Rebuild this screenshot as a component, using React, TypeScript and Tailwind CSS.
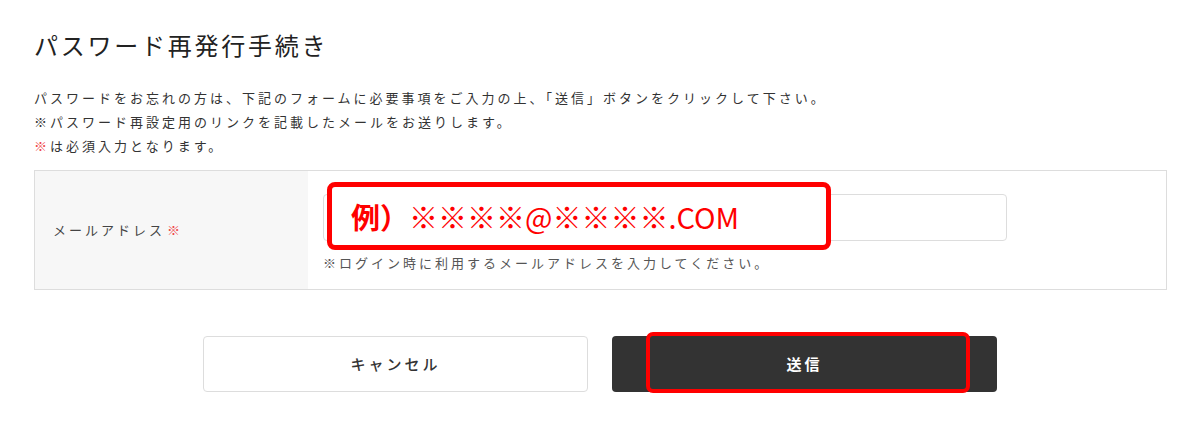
import React from 'react';

const font = { fontFamily: '"Noto Sans CJK JP", "Noto Sans", sans-serif' };

const PasswordReissue = () => {
  return (
    <div className="w-[1200px] h-[423px] bg-white text-[#333] px-[34px] pt-[27px]" style={font}>
      <h1 className="text-[24px] leading-[36px] tracking-[0.115em] font-normal text-[#222]">
        パスワード再発行手続き
      </h1>

      <div className="mt-[23px] text-[13px] leading-[24px] tracking-[3px] text-[#333]">
        <p>パスワードをお忘れの方は、下記のフォームに必要事項をご入力の上、「送信」ボタンをクリックして下さい。</p>
        <p>※パスワード再設定用のリンクを記載したメールをお送りします。</p>
        <p>
          <span className="text-[#f04848]">※</span>は必須入力となります。
        </p>
      </div>

      <div className="mt-[12px] flex border border-[#dddddd] w-[1133px]">
        <div className="w-[273px] bg-[#f7f7f7] flex items-center pl-[18px] text-[13px] tracking-[3px] text-[#444]">
          メールアドレス <span className="ml-[2px] text-[#f04848]">※</span>
        </div>
        <div className="flex-1 pl-[15px] pt-[23px] pb-[16px]">
          <div className="relative w-[684px]">
            <input
              type="text"
              className="w-full h-[47px] border border-[#dddddd] rounded-[4px] outline-none px-3 bg-white"
            />
            <div className="absolute left-[4px] top-[-12px] w-[504px] h-[68px] border-[5px] border-[#ff0000] rounded-[8px] bg-white flex items-center pl-[19px]">
              <span className="text-[29px] leading-none font-bold text-[#ff0000]">例）</span>
              <span className="text-[29px] leading-none font-normal text-[#ff0000]">※※※※@※※※※.COM</span>
            </div>
          </div>
          <p className="mt-[12px] text-[13px] leading-[20px] tracking-[3px] text-[#555]">
            ※ログイン時に利用するメールアドレスを入力してください。
          </p>
        </div>
      </div>

      <div className="mt-[46px] flex justify-center gap-[24px]">
        <button className="w-[385px] h-[56px] border border-[#dddddd] rounded-[4px] bg-white text-[15px] tracking-[0.2em] font-medium text-[#333]">
          キャンセル
        </button>
        <div className="relative">
          <button className="w-[385px] h-[56px] rounded-[4px] bg-[#333333] text-[15px] tracking-[0.2em] text-white font-bold">
            送信
          </button>
          <div className="absolute left-[34px] top-[-4px] w-[324px] h-[61px] border-[4px] border-[#ff0000] rounded-[7px] pointer-events-none" />
        </div>
      </div>
    </div>
  );
};

export default function App() {
  return <PasswordReissue />;
}
